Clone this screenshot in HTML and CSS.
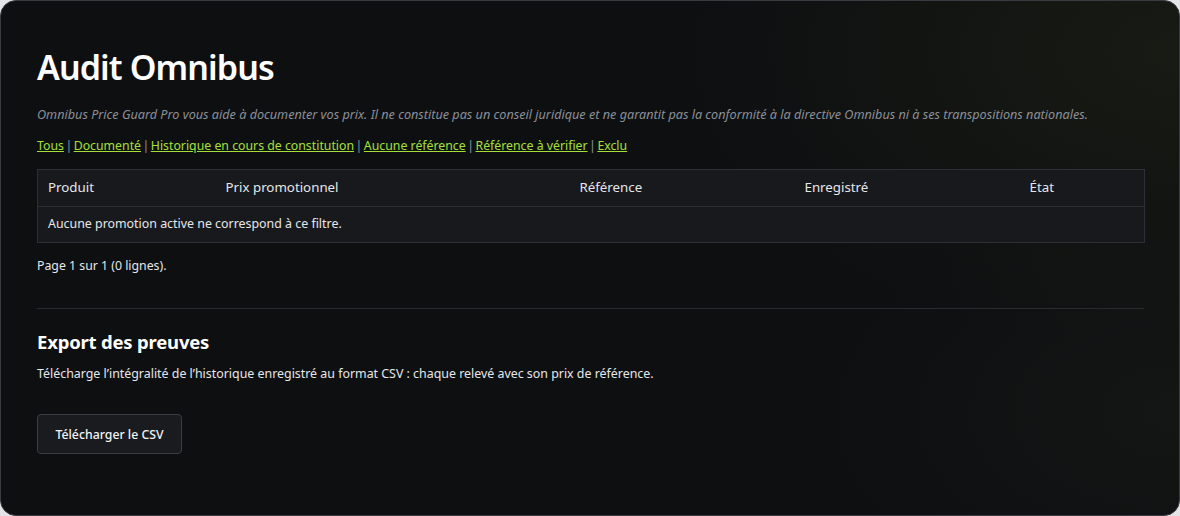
FILE: index.html
```html
<!DOCTYPE html>
<html lang="fr">
<head>
<meta charset="utf-8">
<title>Audit Omnibus</title>
<link rel="stylesheet" href="styles.css">
</head>
<body>
<main class="card">
  <h1 class="title">Audit Omnibus</h1>
  <p class="disclaimer">Omnibus Price Guard Pro vous aide à documenter vos prix. Il ne constitue pas un conseil juridique et ne garantit pas la conformité à la directive Omnibus ni à ses transpositions nationales.</p>
  <nav class="filters">
    <a href="#">Tous</a><span class="sep">|</span><a href="#">Documenté</a><span class="sep">|</span><a href="#">Historique en cours de constitution</a><span class="sep">|</span><a href="#">Aucune référence</a><span class="sep">|</span><a href="#">Référence à vérifier</a><span class="sep">|</span><a href="#">Exclu</a>
  </nav>
  <table class="audit-table">
    <colgroup>
      <col class="c1"><col class="c2"><col class="c3"><col class="c4"><col class="c5">
    </colgroup>
    <thead>
      <tr><th>Produit</th><th>Prix promotionnel</th><th>Référence</th><th>Enregistré</th><th>État</th></tr>
    </thead>
    <tbody>
      <tr><td colspan="5">Aucune promotion active ne correspond à ce filtre.</td></tr>
    </tbody>
  </table>
  <p class="pager">Page 1 sur 1 (0 lignes).</p>
  <hr class="divider">
  <h2 class="subtitle">Export des preuves</h2>
  <p class="desc">Télécharge l’intégralité de l’historique enregistré au format CSV : chaque relevé avec son prix de référence.</p>
  <button class="btn" type="button">Télécharger le CSV</button>
</main>
</body>
</html>
```
FILE: styles.css
```css
html, body {
  margin: 0;
  padding: 0;
  background: #e4e4e6;
  height: 100%;
}
body {
  font-family: "Noto Sans", "Open Sans", sans-serif;
  color: #e6e7ea;
}
.card {
  box-sizing: border-box;
  width: 1180px;
  height: 516px;
  border: 1px solid #3a3b40;
  border-radius: 16px;
  background:
    radial-gradient(ellipse 700px 420px at 100% 10%, rgba(32, 36, 22, 0.55), rgba(32, 36, 22, 0) 70%),
    radial-gradient(ellipse 500px 300px at 100% 80%, rgba(26, 28, 24, 0.5), rgba(26, 28, 24, 0) 70%),
    #0e0f11;
  padding: 44px 36px 0 36px;
  overflow: hidden;
}
.title {
  margin: 0;
  font-size: 34px;
  line-height: 44px;
  font-weight: 600;
  color: #ffffff;
  letter-spacing: -0.9px;
}
.disclaimer {
  margin: 16px 0 0 0;
  font-size: 12.65px;
  line-height: 18px;
  font-style: italic;
  color: #8b9099;
}
.filters {
  margin-top: 14px;
  font-size: 12.3px;
  line-height: 18px;
}
.filters a {
  color: #a5e03a;
  text-decoration: underline;
}
.filters .sep {
  color: #8d96a3;
  margin: 0 1.5px;
}
.audit-table {
  margin-top: 14px;
  width: 1107px;
  border-collapse: collapse;
  table-layout: fixed;
  background: #18191d;
  font-size: 12.4px;
}
.c1 { width: 178px; }
.c2 { width: 354px; }
.c3 { width: 225px; }
.c4 { width: 225px; }
.c5 { width: 125px; }
.audit-table th,
.audit-table td {
  border: 1px solid #2e2f35;
  border-left: none;
  border-right: none;
  padding: 0 10px 2px 10px;
  text-align: left;
}
.audit-table tr > :first-child { border-left: 1px solid #2e2f35; }
.audit-table tr > :last-child { border-right: 1px solid #2e2f35; }
.audit-table th {
  height: 34px;
  font-weight: 400;
  font-size: 13.3px;
  color: #e6e7ea;
}
.audit-table td {
  height: 33px;
  color: #e6e7ea;
}
.pager {
  margin: 14px 0 0 0;
  font-size: 12.3px;
  line-height: 18px;
  color: #e6e7ea;
}
.divider {
  margin: 33px 0 0 0;
  border: none;
  border-top: 1px solid #2a2b31;
  width: 1107px;
}
.subtitle {
  margin: 20px 0 0 0;
  font-size: 18.5px;
  line-height: 26px;
  font-weight: 700;
  letter-spacing: -0.2px;
  color: #ffffff;
}
.desc {
  margin: 10px 0 0 0;
  font-size: 12.4px;
  line-height: 18px;
  color: #e6e7ea;
}
.btn {
  margin-top: 31px;
  width: 145px;
  height: 40px;
  box-sizing: border-box;
  background: #1a1b1f;
  border: 1px solid #3b3c42;
  border-radius: 4px;
  color: #f2f3f5;
  font-family: inherit;
  font-size: 12.3px;
  font-weight: 500;
  cursor: pointer;
}
```
